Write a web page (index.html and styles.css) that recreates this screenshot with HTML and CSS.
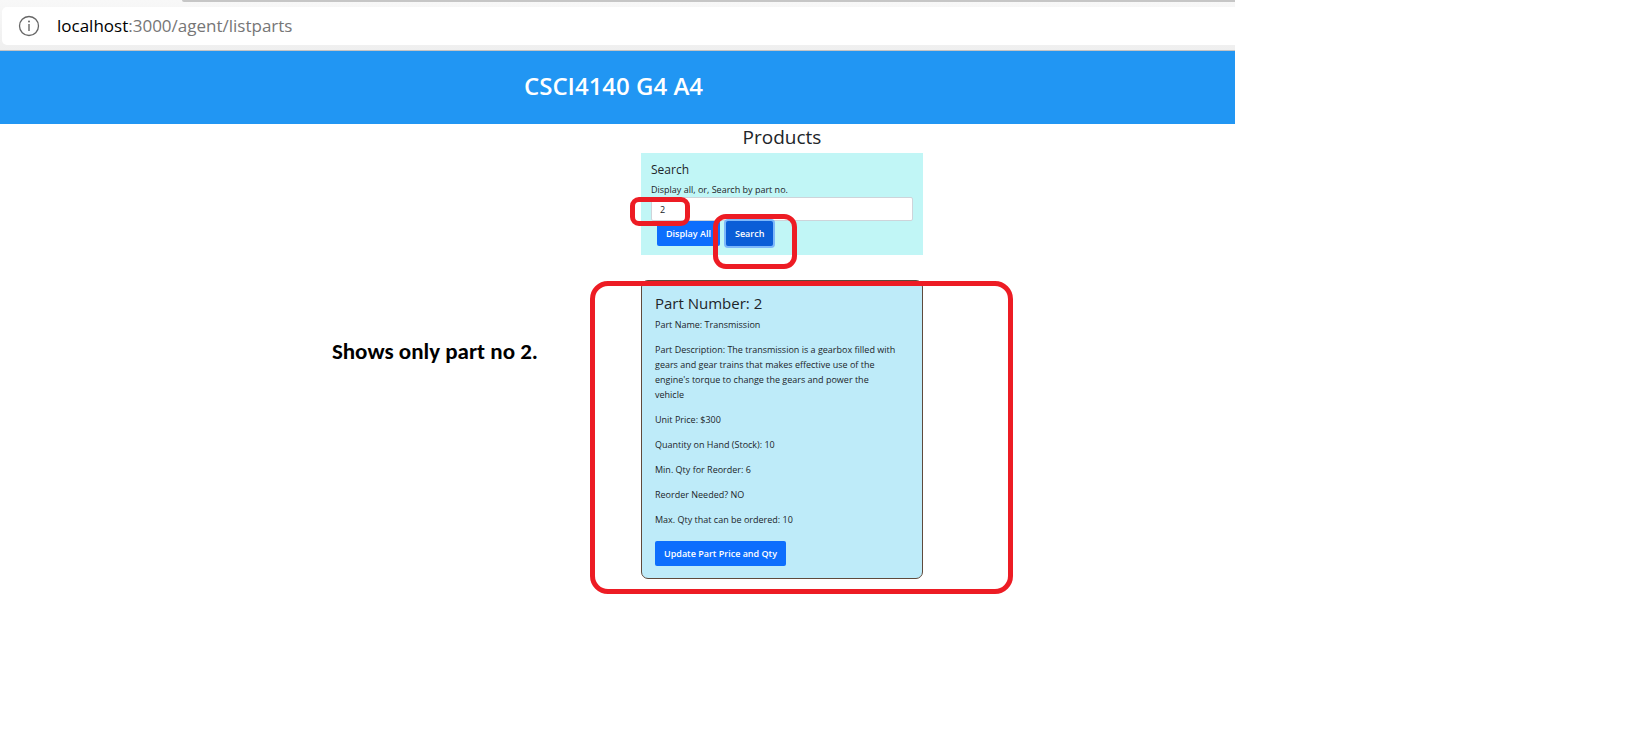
FILE: index.html
```html
<!DOCTYPE html>
<html lang="en">
<head>
<meta charset="utf-8">
<title>CSCI4140 G4 A4</title>
<link rel="stylesheet" href="styles.css">
</head>
<body>
<div class="browser">
  <div class="toolbar">
    <div class="tab-edge"></div>
    <div class="address">
      <svg class="info" viewBox="0 0 22 22" aria-hidden="true">
        <circle cx="11" cy="11" r="9.5" fill="none" stroke="#666" stroke-width="1.3"/>
        <path d="M11 9v7" stroke="#666" stroke-width="1.4"/>
        <circle cx="11" cy="6.5" r="1" fill="#666"/>
      </svg>
      <span class="url">localhost<span class="path">:3000/agent/listparts</span></span>
    </div>
  </div>
  <header class="banner"><h1>CSCI4140 G4 A4</h1></header>
  <main class="page">
    <p class="note">Shows only part no 2.</p>
    <div class="products">
      <h2>Products</h2>
      <form class="search">
        <h3>Search</h3>
        <label for="part">Display all, or, Search by part no.</label>
        <div class="field">
          <input id="part" type="text" value="2">
          <span class="mark mark-input"></span>
        </div>
        <div class="actions">
          <button class="btn" type="button">Display All</button>
          <div class="field">
            <button class="btn btn-focus" type="button">Search</button>
            <span class="mark mark-search"></span>
          </div>
        </div>
      </form>
      <div class="result">
        <article class="card">
          <h3>Part Number: 2</h3>
          <p>Part Name: Transmission</p>
          <p>Part Description: The transmission is a gearbox filled with gears and gear trains that makes effective use of the engine's torque to change the gears and power the vehicle</p>
          <p>Unit Price: $300</p>
          <p>Quantity on Hand (Stock): 10</p>
          <p>Min. Qty for Reorder: 6</p>
          <p>Reorder Needed? NO</p>
          <p>Max. Qty that can be ordered: 10</p>
          <button class="btn" type="button">Update Part Price and Qty</button>
        </article>
        <span class="mark mark-card"></span>
      </div>
    </div>
  </main>
</div>
</body>
</html>
```
FILE: styles.css
```css
* { box-sizing: border-box; }
body {
  margin: 0;
  background: #fff;
  color: #212529;
  font: 9px/15px "Open Sans", "Noto Sans", sans-serif;
}
h1, h2, h3, p { margin: 0; }

.browser { width: 75.86%; }

.toolbar {
  background: linear-gradient(#f8f8f8, #efefef);
  border-bottom: 1px solid #c4c4c4;
  padding: 0 0 5px 2px;
}
.tab-edge {
  height: 2px;
  margin: 0 0 5px 180px;
  background: #c6c6c6;
  border-bottom-left-radius: 4px;
}
.address {
  display: flex;
  align-items: center;
  gap: 17px;
  height: 38px;
  padding-left: 16px;
  background: #fff;
  border-radius: 5px 0 0 5px;
}
.info { width: 22px; height: 22px; }
.url { font-size: 17px; line-height: 24px; color: #000; }
.path { color: #767676; }

.banner {
  padding: 18px 8px 22px 0;
  background: #2196f3;
  color: #fff;
  text-align: center;
}
.banner h1 { font-size: 24px; line-height: 33px; font-weight: 600; }

.page {
  display: grid;
  grid-template-columns: 641fr 282fr 312fr;
  padding-bottom: 48px;
}
.note {
  justify-self: end;
  margin: 212px 103px 0 0;
  color: #000;
  font: bold 23px/30px Calibri, Carlito, Lato, sans-serif;
  white-space: nowrap;
}
.products h2 {
  padding: 1px 0 4px;
  font-size: 19px;
  line-height: 24px;
  font-weight: 500;
  text-align: center;
}

.search {
  padding: 10px 10px 9px;
  background: #c1f6f6;
}
.search h3 {
  margin-bottom: 5px;
  font-size: 12px;
  line-height: 14px;
  font-weight: 500;
}
.search label { display: block; }
.field { position: relative; }
.search input {
  display: block;
  width: 100%;
  height: 24px;
  padding: 0 8px;
  border: 1px solid #ced4da;
  border-radius: 2px;
  background: #fff;
  color: #212529;
  font: inherit;
}
.actions { display: flex; gap: 6px; padding-left: 6px; }

.btn {
  display: block;
  padding: 5px 9px;
  border: 0;
  border-radius: 2px;
  background: #0d6efd;
  color: #fff;
  font: 600 9px/15px "Open Sans", "Noto Sans", sans-serif;
  white-space: nowrap;
}
.btn-focus {
  background: #0b5ed7;
  box-shadow: 0 0 0 2px #7db8fa;
}

.result { position: relative; margin-top: 25px; }
.card {
  padding: 13px 25px 12px 13px;
  border: 1px solid #5f4a3c;
  border-radius: 7px;
  background: #beebf9;
}
.card h3 {
  margin-bottom: 5px;
  font-size: 15px;
  line-height: 18px;
  font-weight: 500;
}
.card p { margin-bottom: 10px; }
.card .btn { margin-top: 14px; }

.mark {
  position: absolute;
  border: 5px solid #ed1c24;
  pointer-events: none;
}
.mark-input { left: -21px; top: 0; width: 60px; height: 29px; border-radius: 9px; }
.mark-search { left: -13px; top: -7px; width: 84px; height: 55px; border-radius: 13px; }
.mark-card { left: -51px; right: -90px; top: 1px; bottom: -15px; border-radius: 18px; }
```
